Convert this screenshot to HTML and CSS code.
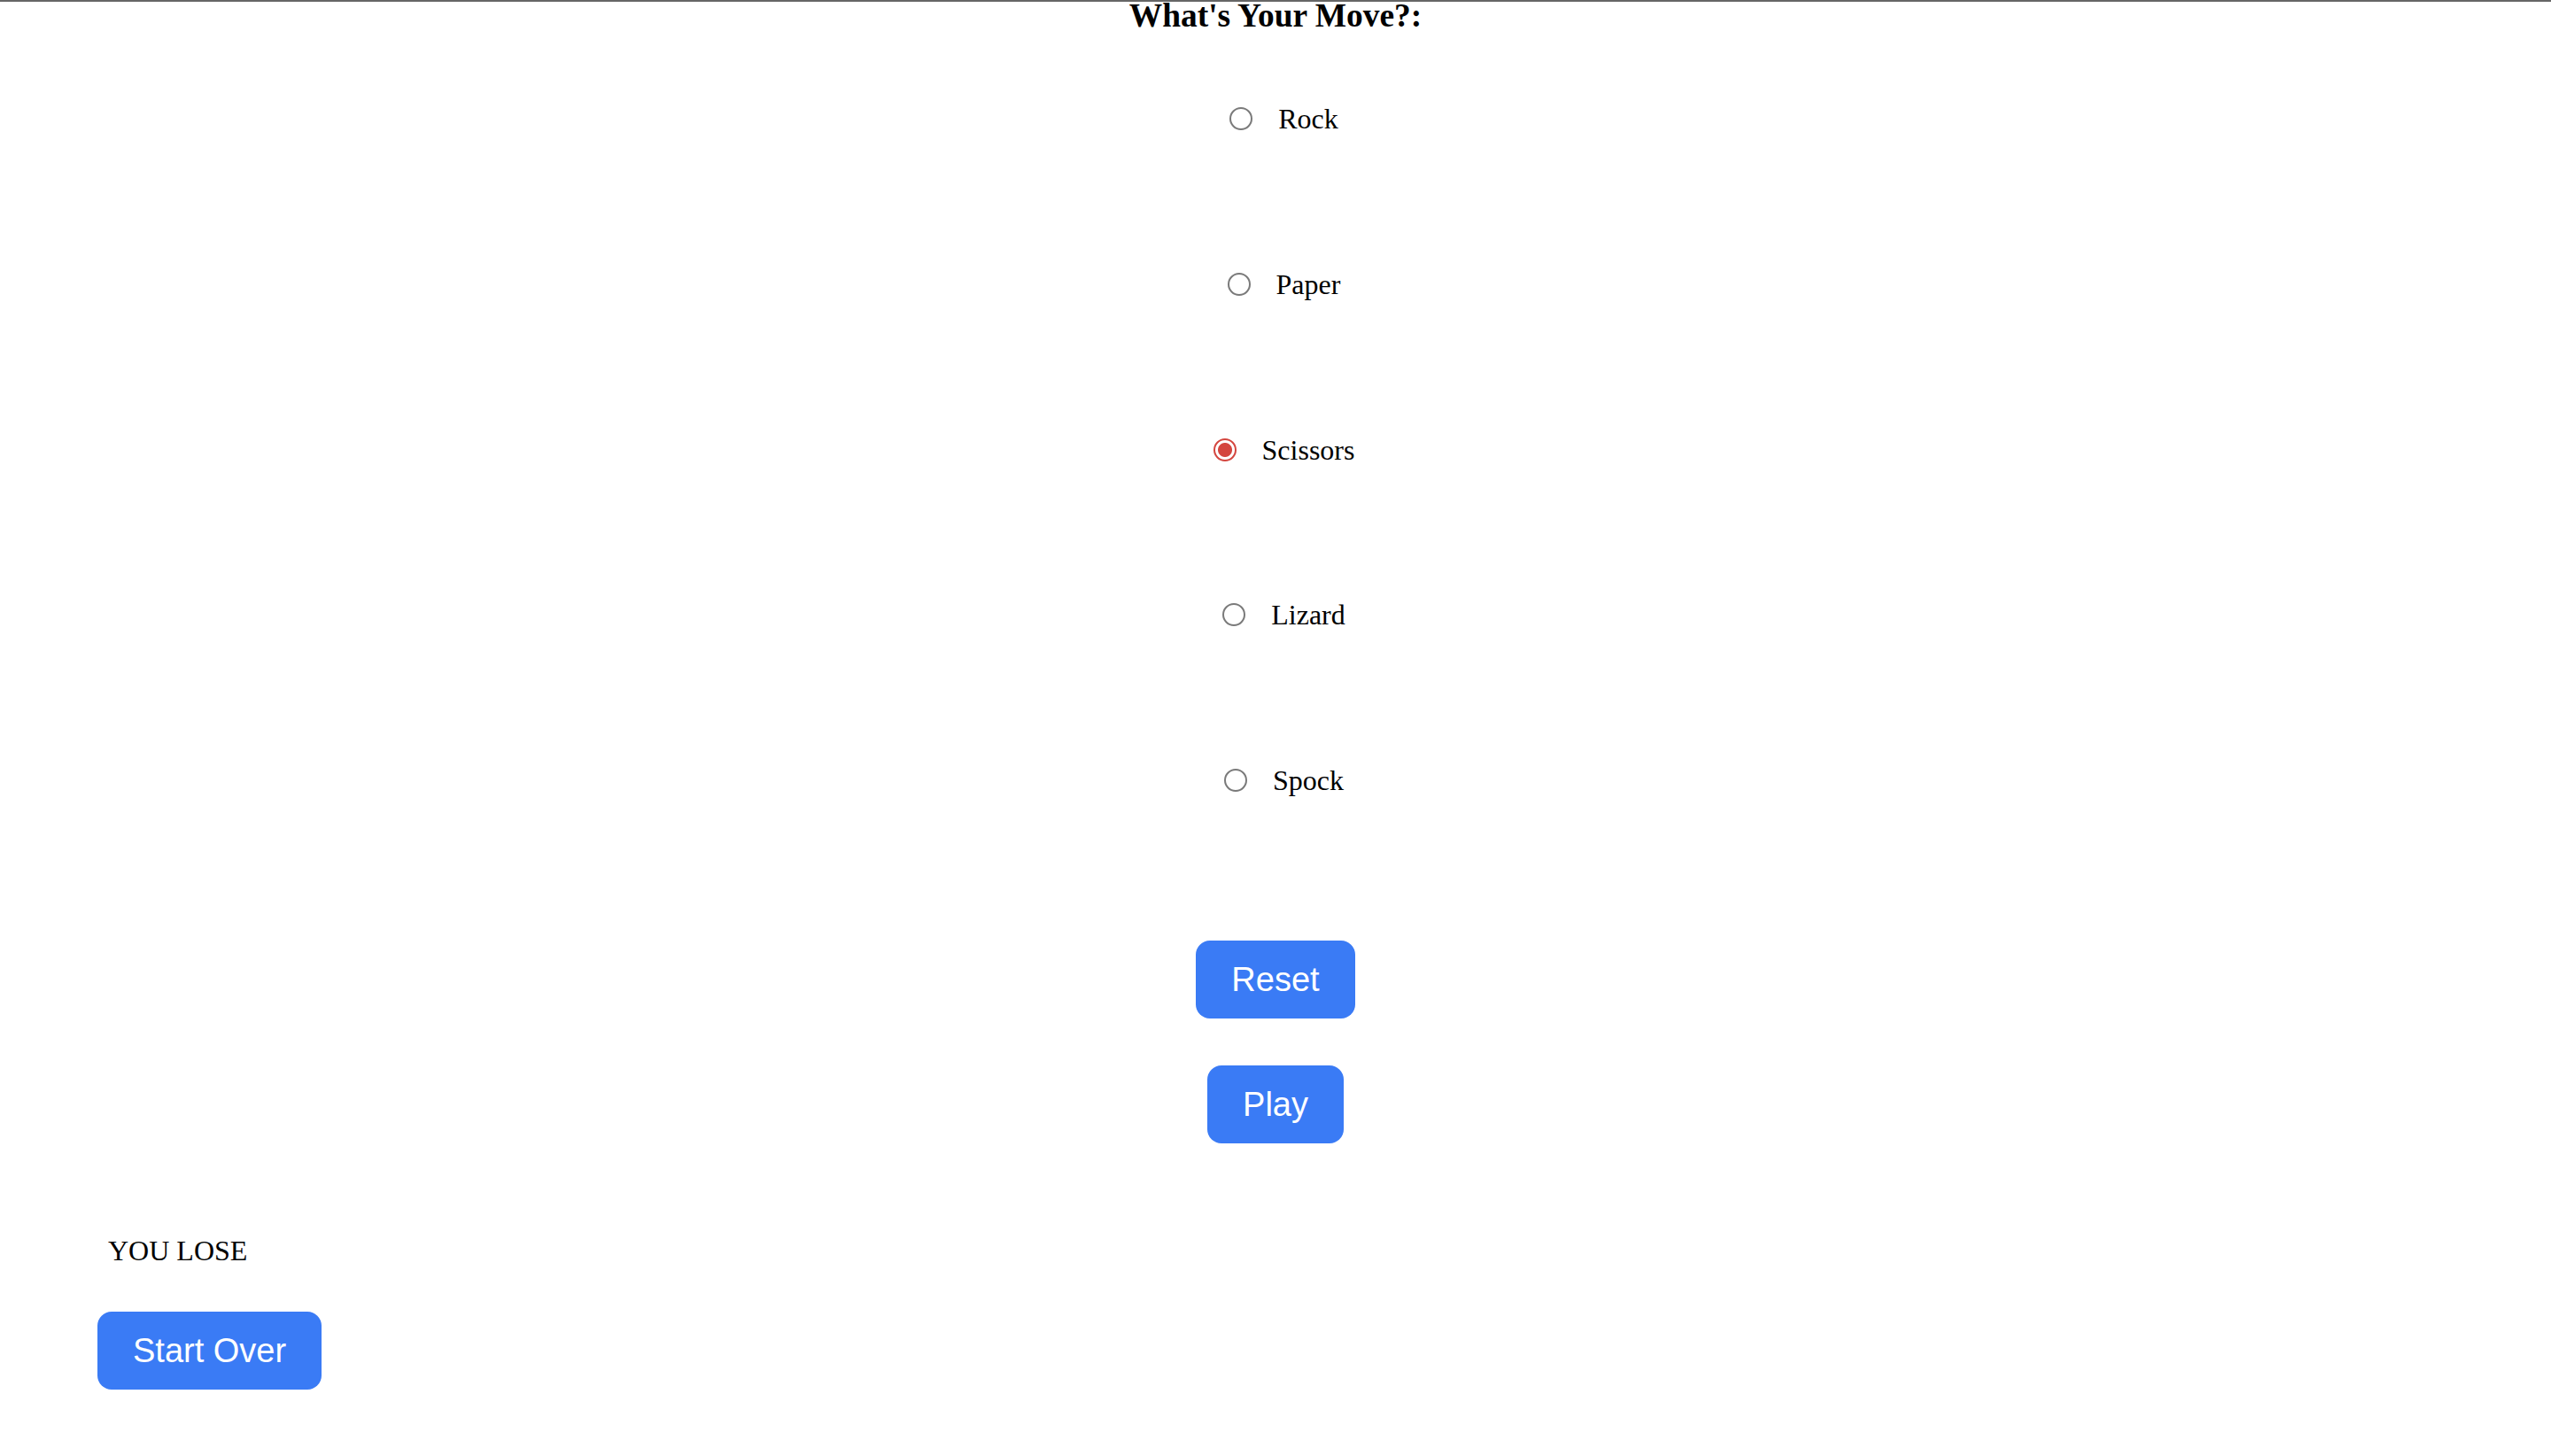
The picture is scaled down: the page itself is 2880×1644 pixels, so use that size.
FILE: index.html
```html
<!DOCTYPE html>
<html lang="en">
<head>
<meta charset="utf-8">
<title>Rock Paper Scissors Lizard Spock</title>
<link rel="stylesheet" href="styles.css">
</head>
<body>
<main class="game">
  <h3 class="title">What's Your Move?:</h3>
  <form class="moves">
    <label class="move"><input type="radio" name="move" value="rock"><span class="move-name">Rock</span></label>
    <label class="move"><input type="radio" name="move" value="paper"><span class="move-name">Paper</span></label>
    <label class="move"><input type="radio" name="move" value="scissors" checked><span class="move-name">Scissors</span></label>
    <label class="move"><input type="radio" name="move" value="lizard"><span class="move-name">Lizard</span></label>
    <label class="move"><input type="radio" name="move" value="spock"><span class="move-name">Spock</span></label>
  </form>
  <div class="controls">
    <button type="button" class="btn">Reset</button>
    <button type="button" class="btn">Play</button>
  </div>
  <section class="result">
    <p class="result-text">YOU LOSE</p>
    <button type="button" class="btn">Start Over</button>
  </section>
</main>
</body>
</html>
```
FILE: styles.css
```css
html, body {
  margin: 0;
  padding: 0;
  background: #ffffff;
}

body {
  border-top: 2px solid #666666;
  font-family: "Liberation Serif", "Times New Roman", serif;
  color: #000000;
}

.game {
  display: flex;
  flex-direction: column;
}

.title {
  margin: 0;
  font-size: 37.44px;
  line-height: 31px;
  font-weight: bold;
  text-align: center;
}

.moves {
  margin: 85px 0 0 0;
  display: flex;
  flex-direction: column;
  align-items: center;
  gap: 154.75px;
}

.move {
  display: flex;
  align-items: center;
  gap: 29px;
  padding-left: 19px;
  height: 32px;
  font-size: 32px;
  line-height: 32px;
}

.move input {
  appearance: none;
  -webkit-appearance: none;
  box-sizing: border-box;
  width: 26px;
  height: 26px;
  margin: 0;
  border: 2px solid #7a7a7a;
  border-radius: 50%;
  background: #ffffff;
  flex: none;
}

.move input:checked {
  border-color: #d4463f;
  background: radial-gradient(circle, #d4463f 0, #d4463f 7.5px, #ffffff 8.5px);
}

.move-name {
  display: block;
}

.controls {
  margin-top: 165px;
  display: flex;
  flex-direction: column;
  align-items: center;
  gap: 53px;
}

.btn {
  height: 88px;
  padding: 0 40px;
  border: none;
  border-radius: 16px;
  background: #3a7bf5;
  color: #ffffff;
  font-family: "Liberation Sans", Arial, sans-serif;
  font-size: 38px;
  line-height: 88px;
}

.result {
  margin-top: 105px;
  padding-left: 110px;
  display: flex;
  flex-direction: column;
  align-items: flex-start;
  gap: 53px;
}

.result-text {
  margin: 0;
  padding-left: 12px;
  font-size: 32px;
  line-height: 32px;
}
```
